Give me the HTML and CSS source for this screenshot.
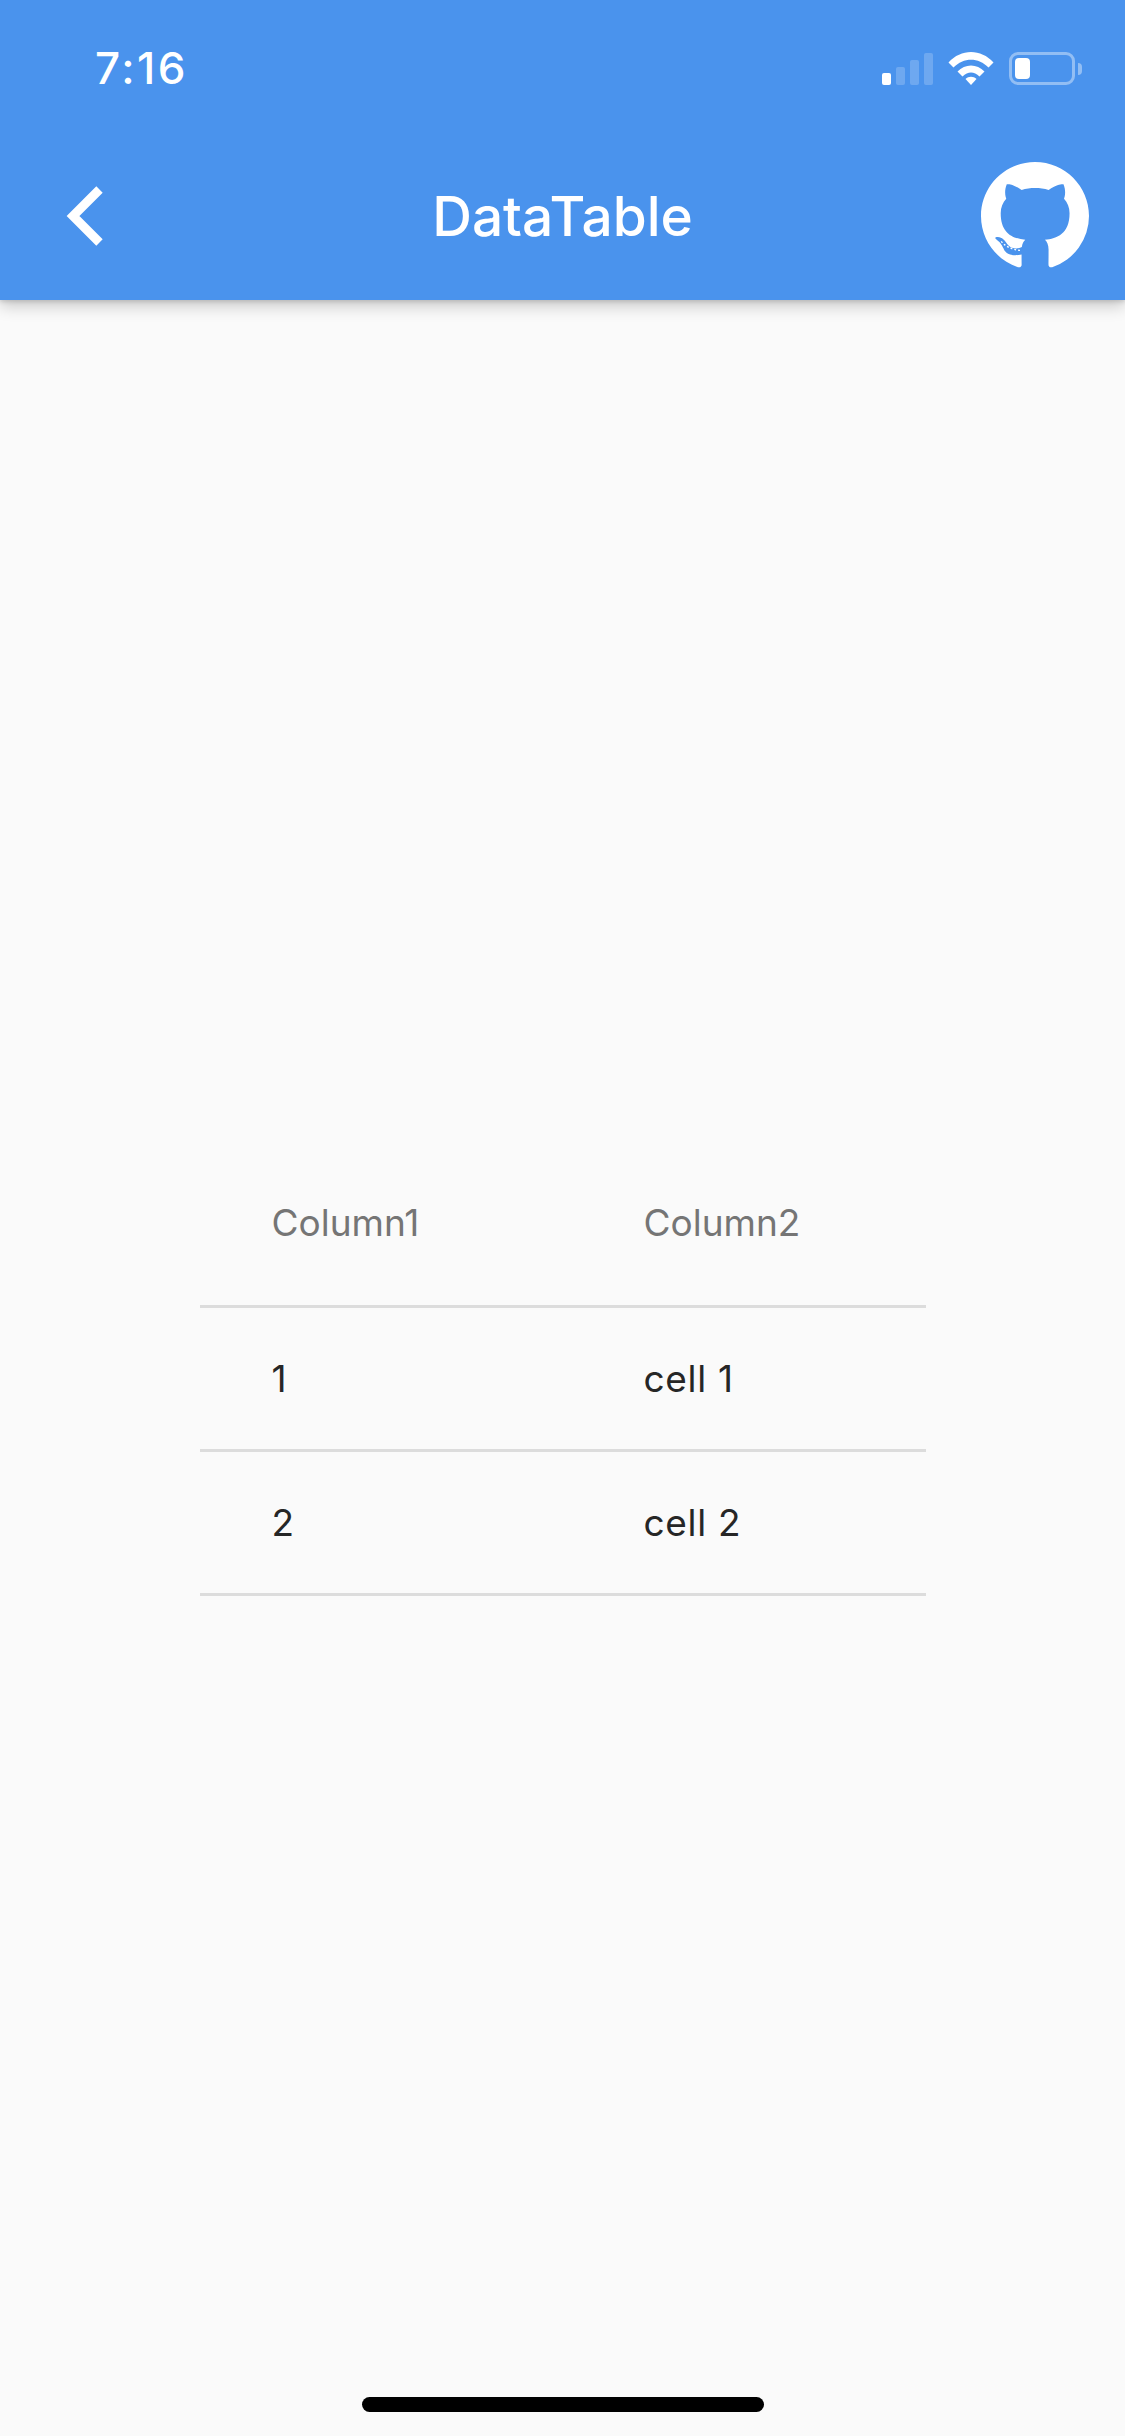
FILE: index.html
```html
<!DOCTYPE html>
<html lang="en">
  <head>
    <meta charset="UTF-8" />
    <meta name="viewport" content="width=device-width, initial-scale=1.0" />
    <title>DataTable</title>
    <link rel="stylesheet" href="styles.css">
  </head>
  <body>
    <header class="app-header">
      <div class="status-bar">
        <span class="time">7:16</span>
        <div class="status-icons">
          <div class="signal">
            <span class="bar bar-1"></span>
            <span class="bar bar-2"></span>
            <span class="bar bar-3"></span>
            <span class="bar bar-4"></span>
          </div>
          <svg class="wifi" viewBox="0 0 46 33">
            <path d="M0.5 10.5C13 -3.5 33 -3.5 45.5 10.5L40.5 15.5C30.5 5 15.5 5 5.5 15.5Z" />
            <path d="M9.5 19.5C17 11.5 29 11.5 36.5 19.5L31.5 24.5C26 19 20 19 14.5 24.5Z" />
            <path d="M17.5 27C20.5 24 25.5 24 28.5 27L23 33Z" />
          </svg>
          <div class="battery">
            <div class="battery-body"><span class="battery-level"></span></div>
            <span class="battery-cap"></span>
          </div>
        </div>
      </div>
      <div class="toolbar">
        <svg class="back" viewBox="0 0 40 60">
          <path d="M34.5 3.5L8 30L34.5 56.5" />
        </svg>
        <h1 class="title">DataTable</h1>
        <svg class="github" viewBox="0 0 16 16">
          <path fill-rule="evenodd" d="M8 0C3.58 0 0 3.58 0 8c0 3.54 2.29 6.53 5.47 7.59.4.07.55-.17.55-.38 0-.19-.01-.82-.01-1.49-2.01.37-2.53-.49-2.69-.94-.09-.23-.48-.94-.82-1.13-.28-.15-.68-.52-.01-.53.63-.01 1.08.58 1.23.82.72 1.21 1.87.87 2.33.66.07-.52.28-.87.51-1.07-1.78-.2-3.64-.89-3.64-3.95 0-.87.31-1.59.82-2.15-.08-.2-.36-1.02.08-2.12 0 0 .67-.21 2.2.82.64-.18 1.32-.27 2-.27.68 0 1.36.09 2 .27 1.53-1.04 2.2-.82 2.2-.82.44 1.1.16 1.92.08 2.12.51.56.82 1.28.82 2.15 0 3.07-1.87 3.75-3.65 3.95.29.25.54.73.54 1.48 0 1.07-.01 1.93-.01 2.2 0 .21.15.46.55.38A8.013 8.013 0 0016 8c0-4.42-3.58-8-8-8z" />
          <path class="github-tail" d="M3 11.75C3.6 12.5 4.5 13 5.9 13.1" />
        </svg>
      </div>
    </header>

    <main class="content">
      <table class="data-table">
        <thead>
          <tr>
            <th class="col-1">Column1</th>
            <th>Column2</th>
          </tr>
        </thead>
        <tbody>
          <tr>
            <td>1</td>
            <td>cell 1</td>
          </tr>
          <tr>
            <td>2</td>
            <td>cell 2</td>
          </tr>
        </tbody>
      </table>
    </main>

    <div class="home-indicator"></div>
  </body>
</html>
```

FILE: styles.css
```css
* {
  box-sizing: border-box;
}

html,
body {
  margin: 0;
  height: 100%;
}

body {
  position: relative;
  display: flex;
  flex-direction: column;
  height: 2436px;
  overflow: hidden;
  background: #fafafa;
  font-family: Inter, "Liberation Sans", sans-serif;
}

.app-header {
  position: relative;
  z-index: 1;
  height: 300px;
  background: #4a93ed;
  box-shadow: 0 6px 15px rgba(0, 0, 0, 0.2), 0 2px 4px rgba(0, 0, 0, 0.12);
  color: #fff;
}

/* status bar */
.status-bar {
  display: flex;
  justify-content: space-between;
  align-items: flex-start;
  height: 132px;
  padding: 52px 43px 0 95px;
}

.time {
  font-size: 44px;
  font-weight: 500;
  line-height: 33px;
  letter-spacing: 2.5px;
}

.status-icons {
  display: flex;
  align-items: flex-start;
  gap: 15px;
}

.signal {
  display: flex;
  align-items: flex-end;
  gap: 5px;
  height: 33px;
}

.bar {
  width: 9px;
  border-radius: 2px;
  background: rgba(255, 255, 255, 0.2);
}

.bar-1 {
  height: 12px;
  background: #fff;
}

.bar-2 {
  height: 18px;
}

.bar-3 {
  height: 25px;
}

.bar-4 {
  height: 32px;
}

.wifi {
  width: 46px;
  height: 33px;
  fill: #fff;
}

.battery {
  display: flex;
  align-items: center;
  gap: 3px;
  height: 33px;
}

.battery-body {
  width: 66px;
  height: 33px;
  padding: 3px;
  border: 3px solid rgba(255, 255, 255, 0.4);
  border-radius: 9px;
}

.battery-level {
  display: block;
  width: 15px;
  height: 21px;
  border-radius: 4px;
  background: #fff;
}

.battery-cap {
  width: 4px;
  height: 12px;
  border-radius: 0 4px 4px 0;
  background: rgba(255, 255, 255, 0.4);
}

/* toolbar */
.toolbar {
  display: grid;
  grid-template-columns: 1fr auto 1fr;
  align-items: center;
  height: 168px;
}

.back {
  width: 40px;
  height: 60px;
  margin-left: 65px;
  fill: none;
  stroke: #fff;
  stroke-width: 9;
}

.title {
  margin: 0;
  font-size: 55px;
  font-weight: 500;
  line-height: 1;
}

.github {
  justify-self: end;
  width: 108px;
  height: 108px;
  margin-right: 36px;
  fill: #fff;
}

.github-tail {
  fill: none;
  stroke: #fff;
  stroke-width: 0.2;
  stroke-dasharray: 0.28 0.3;
}

/* table */
.content {
  display: flex;
  flex: 1;
  justify-content: center;
  align-items: center;
}

.data-table {
  width: 726px;
  border-collapse: separate;
  border-spacing: 0;
  table-layout: fixed;
  font-size: 37px;
}

.data-table th,
.data-table td {
  padding: 0 0 0 72px;
  border-bottom: 3px solid #dcdcdc;
  text-align: left;
}

.data-table th {
  height: 168px;
  color: #757575;
  font-weight: 400;
}

.data-table td {
  height: 144px;
  color: #262626;
  letter-spacing: 0.7px;
}

.col-1 {
  width: 372px;
}

.home-indicator {
  position: absolute;
  left: 362px;
  bottom: 24px;
  width: 402px;
  height: 15px;
  border-radius: 8px;
  background: #000;
}
```
